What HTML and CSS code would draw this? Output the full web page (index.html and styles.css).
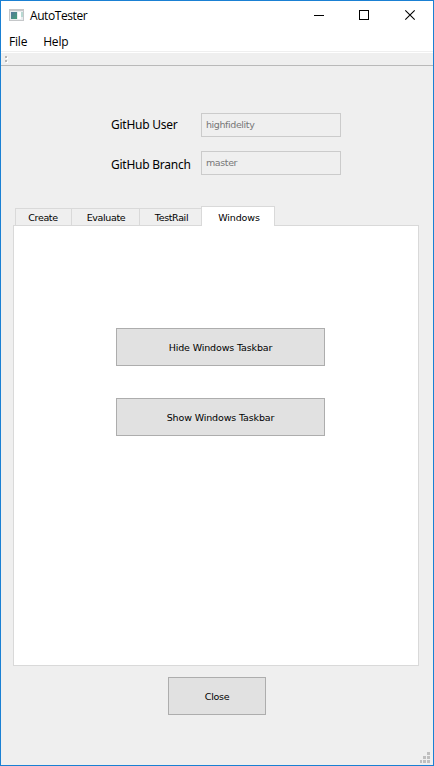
FILE: index.html
```html
<!DOCTYPE html>
<html lang="en">
<head>
<meta charset="utf-8">
<title>AutoTester</title>
<link rel="stylesheet" href="styles.css">
</head>
<body>
<div class="window">
  <header class="titlebar">
    <svg class="app-icon" width="16" height="13" viewBox="0 0 16 13" shape-rendering="crispEdges">
      <defs><linearGradient id="screen" x1="0" y1="0" x2="1" y2="1"><stop offset="0" stop-color="#53769b"/><stop offset="1" stop-color="#43a078"/></linearGradient></defs>
      <path fill="#c5c7c9" d="M0 0h15v12H0z"/>
      <path fill="#e9edef" d="M1 2h13v9H1z"/>
      <path fill="url(#screen)" d="M2 3h6v7H2z"/>
      <path fill="#fff" d="M9 3h3v7H9z"/>
      <path fill="#b8d9d2" d="M12 3h2v5h-2z"/>
    </svg>
    <span class="title">AutoTester</span>
    <svg class="controls" width="103" height="12" viewBox="0 0 103 12" fill="none" stroke="#000">
      <path d="M1 6.5h10M46.5 1.5h9v9h-9z" shape-rendering="crispEdges"/>
      <path d="M92.3 1.3l9.4 9.4M101.7 1.3l-9.4 9.4" stroke-width="1.1"/>
    </svg>
  </header>
  <nav class="menubar"><span class="file">File</span><span class="help">Help</span></nav>
  <div class="toolbar">
    <svg width="3" height="7" viewBox="0 0 3 7" shape-rendering="crispEdges"><path fill="#fff" d="M1 1h2v2H1zM1 5h2v2H1z"/><path fill="#b5b5b5" d="M0 0h2v2H0zM0 4h2v2H0z"/></svg>
  </div>
  <main class="content">
    <form class="fields">
      <label><span class="user">GitHub User</span></label><div class="input"><span class="t-user">highfidelity</span></div>
      <label><span class="branch">GitHub Branch</span></label><div class="input"><span class="t-master">master</span></div>
    </form>
    <div class="tabs">
      <div class="tab create"><span>Create</span></div>
      <div class="tab evaluate"><span>Evaluate</span></div>
      <div class="tab testrail"><span>TestRail</span></div>
      <div class="tab active"><span>Windows</span></div>
    </div>
    <section class="pane">
      <button><span>Hide Windows Taskbar</span></button>
      <button><span class="show">Show Windows Taskbar</span></button>
    </section>
    <button class="close"><span>Close</span></button>
  </main>
  <svg class="grip" width="10" height="11" viewBox="0 0 10 11" fill="#bfbfbf" shape-rendering="crispEdges"><path d="M7 0h3v3H7zM3 4h3v3H3zM7 4h3v3H7zM0 8h2v3H0zM3 8h3v3H3zM7 8h3v3H7z"/></svg>
</div>
</body>
</html>
```
FILE: styles.css
```css
* { box-sizing: border-box; }
body { margin: 0; font-family: "DejaVu Sans", sans-serif; font-size: 9.5px; letter-spacing: -0.14px; color: #000; }
.window { position: relative; width: 434px; height: 766px; border: 1px solid #1a80d3; background: #efefef; display: flex; flex-direction: column; overflow: hidden; }
.titlebar { height: 30px; background: #fff; display: flex; align-items: flex-start; padding: 8px 17px 0 8px; }
.title { font: 12px/16px "Open Sans", sans-serif; margin: -1px 0 0 5px; letter-spacing: -0.42px; }
.controls { margin: 0 0 0 auto; }
.menubar { height: 22px; background: #fff; box-shadow: inset 0 -1px #fff, inset 0 -2px #efefef; display: flex; gap: 16px; padding: 3px 8px 0; font: 12px/16px "Open Sans", sans-serif; letter-spacing: -0.2px; }
.toolbar { height: 13px; border-bottom: 1px solid #b9b9b9; padding: 3px 0 0 4px; display: flex; }
.content { flex: 1; display: flex; flex-direction: column; padding: 47px 0 0 12px; }
.fields { display: grid; grid-template-columns: 90px 140px; row-gap: 14px; margin: 0 0 0 98px; }
label { font: 12px/24px "Noto Sans", sans-serif; letter-spacing: -0.24px; white-space: nowrap; }
label .branch { position: relative; top: 2px; }
.input { height: 24px; border: 1px solid #cbcbcb; padding-left: 4px; line-height: 22px; letter-spacing: -0.4px; color: #777; }
.tabs { display: flex; align-items: flex-end; height: 20px; margin: 31px 0 -1px 1px; z-index: 1; padding-left: 1px; }
.tab { height: 17px; margin-bottom: 1px; border: 1px solid #d9d9d9; border-width: 1px 0 0 1px; line-height: 18px; letter-spacing: -0.35px; text-align: center; }
.create { width: 56px; padding-right: 1px; }
.evaluate { width: 68px; padding-left: 1px; }
.testrail { width: 62px; padding-left: 2px; }
.active { width: 74px; height: 20px; margin: 0; background: #fff; border-right-width: 1px; line-height: 21px; letter-spacing: -0.14px; padding-left: 2px; }
.pane { width: 406px; height: 441px; border: 1px solid #d9d9d9; background: #fff; display: flex; flex-direction: column; gap: 32px; padding: 102px 0 0 102px; }
button { width: 209px; height: 38px; border: 1px solid #adadad; background: #e1e1e1; font: inherit; letter-spacing: inherit; color: #000; padding: 0; }
.close { width: 98px; margin: 11px 0 0 155px; letter-spacing: -0.3px; }
.grip { position: absolute; right: 3px; bottom: 2px; }
```
